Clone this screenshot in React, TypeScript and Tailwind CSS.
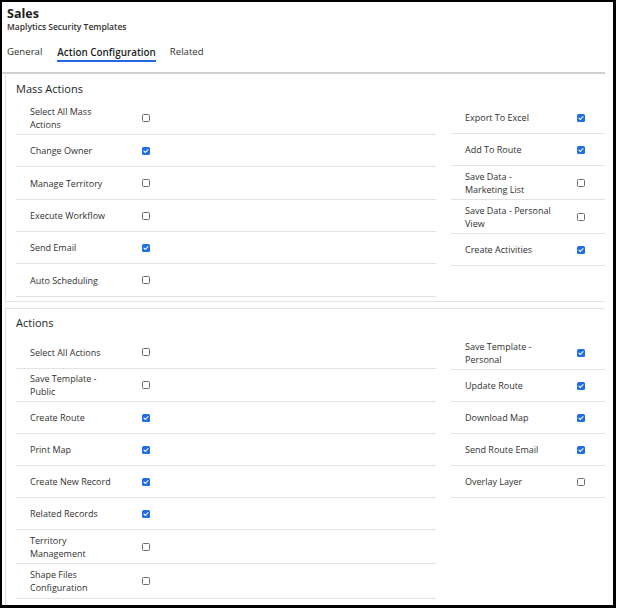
import { Fragment } from "react";

type Item = { label: string; checked: boolean; h: number };

const massLeft: Item[] = [
  { label: "Select All Mass\nActions", checked: false, h: 33 },
  { label: "Change Owner", checked: true, h: 32 },
  { label: "Manage Territory", checked: false, h: 33 },
  { label: "Execute Workflow", checked: false, h: 32 },
  { label: "Send Email", checked: true, h: 32 },
  { label: "Auto Scheduling", checked: false, h: 33 },
];

const massRight: Item[] = [
  { label: "Export To Excel", checked: true, h: 32 },
  { label: "Add To Route", checked: true, h: 32 },
  { label: "Save Data -\nMarketing List", checked: false, h: 34 },
  { label: "Save Data - Personal\nView", checked: false, h: 34 },
  { label: "Create Activities", checked: true, h: 32 },
];

const actionsLeft: Item[] = [
  { label: "Select All Actions", checked: false, h: 33 },
  { label: "Save Template -\nPublic", checked: false, h: 33 },
  { label: "Create Route", checked: true, h: 32 },
  { label: "Print Map", checked: true, h: 32 },
  { label: "Create New Record", checked: true, h: 32 },
  { label: "Related Records", checked: true, h: 32 },
  { label: "Territory\nManagement", checked: false, h: 34 },
  { label: "Shape Files\nConfiguration", checked: false, h: 35 },
];

const actionsRight: Item[] = [
  { label: "Save Template -\nPersonal", checked: true, h: 34 },
  { label: "Update Route", checked: true, h: 32 },
  { label: "Download Map", checked: true, h: 32 },
  { label: "Send Route Email", checked: true, h: 32 },
  { label: "Overlay Layer", checked: false, h: 32 },
];

const Check = ({ checked }: { checked: boolean }) =>
  checked ? (
    <span className="flex h-[8px] w-[8px] items-center justify-center rounded-[1.5px] bg-[#1e6fe6]">
      <svg width="6" height="6" viewBox="0 0 6 6" fill="none">
        <path d="M1 3.2 L2.4 4.5 L5 1.6" stroke="white" strokeWidth="1.1" strokeLinecap="round" strokeLinejoin="round" />
      </svg>
    </span>
  ) : (
    <span className="block h-[8px] w-[8px] rounded-[1.5px] border border-[#6f6d6b] bg-white"></span>
  );

const Row = ({ item }: { item: Item }) => (
  <div className="flex items-center border-b border-[#e3e2e1]" style={{ height: item.h }}>
    <div className="w-[126px] pl-[14px] text-[9px] leading-[13px] text-[#323130]">
      {item.label.split("\n").map((line, i) => (
        <Fragment key={i}>
          {i > 0 && <br />}
          {line}
        </Fragment>
      ))}
    </div>
    <Check checked={item.checked} />
  </div>
);

const Section = ({
  title,
  left,
  right,
  className,
}: {
  title: string;
  left: Item[];
  right: Item[];
  className: string;
}) => (
  <div className={className}>
    <div className="pl-[10px] text-[11px] leading-[12px] text-[#201f1e]">{title}</div>
    <div className="mt-[7px] flex pl-[10px]">
      <div className="w-[420px] shrink-0">
        {left.map((item) => (
          <Row key={item.label} item={item} />
        ))}
      </div>
      <div className="ml-[15px] w-[154px] shrink-0">
        {right.map((item) => (
          <Row key={item.label} item={item} />
        ))}
      </div>
    </div>
  </div>
);

export default function App() {
  return (
    <div
      className="h-[608px] w-[616px] overflow-hidden border-t-2 border-l-2 border-r-[3px] border-b-[3px] border-black bg-white"
      style={{ fontFamily: '"Open Sans", "Noto Sans", sans-serif' }}
    >
      <div className="pl-[5px] pt-[4px]">
        <div className="text-[12.5px] font-bold leading-[15px] text-[#201f1e]">Sales</div>
        <div className="text-[8.5px] font-semibold leading-[12px] text-[#323130]">Maplytics Security Templates</div>
      </div>
      <div className="flex pl-[5px] pt-[12px] text-[9.6px] leading-[14px] text-[#323130]">
        <span className="pb-[3px]">General</span>
        <span className="ml-[15px] border-b-2 border-[#2266e3] pb-[1px] text-[9.9px] font-semibold text-[#201f1e]">
          Action Configuration
        </span>
        <span className="ml-[14px] pb-[3px]">Related</span>
      </div>
      <div className="mr-[8px] mt-[10px] h-[2px] bg-[#d2d0ce]"></div>
      <Section
        title="Mass Actions"
        left={massLeft}
        right={massRight}
        className="ml-[3px] mr-[8px] mt-[1px] border-l border-b border-[#e3e2e1] pt-[8px] pb-[4px]"
      />
      <Section
        title="Actions"
        left={actionsLeft}
        right={actionsRight}
        className="ml-[3px] mr-[8px] mt-[6px] h-[400px] border-l border-t border-[#e3e2e1] pt-[8px]"
      />
    </div>
  );
}
